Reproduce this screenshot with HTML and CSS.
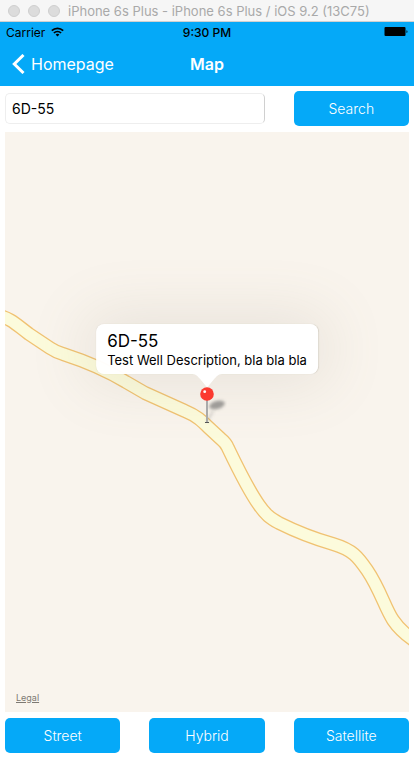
FILE: index.html
```html
<!DOCTYPE html>
<html lang="en">
<head>
<meta charset="utf-8">
<meta name="viewport" content="width=device-width, initial-scale=1">
<title>Map</title>
<link rel="stylesheet" href="styles.css">
</head>
<body>
<div class="window-bar">
  <div class="lights"><span class="light"></span><span class="light"></span><span class="light"></span></div>
  <span class="window-title">iPhone 6s Plus - iPhone 6s Plus / iOS 9.2 (13C75)</span>
</div>
<header class="top">
  <div class="status">
    <div class="carrier">Carrier
      <svg width="13" height="10" viewBox="0 0 13 10" fill="none" stroke="#000" stroke-width="1.7"><path d="M.8 3.6a8.2 8.2 0 0 1 11.4 0M2.9 6a5.2 5.2 0 0 1 7.2 0"/><path d="M6.5 9.5 4.6 7.6a2.8 2.8 0 0 1 3.8 0z" fill="#000" stroke="none"/></svg>
    </div>
    <span class="time">9:30 PM</span>
    <svg class="battery" width="24" height="10" viewBox="0 0 24 10"><rect x=".5" width="21" height="9" rx="1"/><path d="M22.5 3.2c1.3.3 1.3 2.5 0 2.8z"/></svg>
  </div>
  <nav class="nav">
    <a class="back" href="#"><svg width="13" height="20" viewBox="0 0 13 20" fill="none" stroke="#fff" stroke-width="3"><path d="M11.5 1 2.3 10l9.2 9"/></svg>Homepage</a>
    <h1 class="title">Map</h1>
  </nav>
</header>
<main class="content">
  <form class="row">
    <input class="field" type="text" aria-label="Well name" value="6D-55">
    <button class="btn" type="button">Search</button>
  </form>
  <section class="map" aria-label="Map">
    <svg class="roads" viewBox="5 132 404 580" preserveAspectRatio="xMidYMid slice" fill="none" stroke-linejoin="round">
      <defs><path id="road" d="M-5 315C10 317 18 326 29 334L50 348Q56 352 63 354Q100 366 126 382L145 393L185 411C197 416 202 421 208 427L221 439Q226 443 228 448C240 473 249 491 259 505C266 515 270 518 279 523Q305 536 333 544C353 550 358 557 367 570C380 589 385 608 393 620C399 629 407 636 418 643"/></defs>
      <use href="#road" stroke="#f0c272" stroke-width="14"/>
      <use href="#road" stroke="#fcfbdc" stroke-width="11.4"/>
    </svg>
    <div class="callout">
      <strong class="name">6D-55</strong>
      <span class="desc">Test Well Description, bla bla bla</span>
      <svg class="tail" width="30" height="14" viewBox="0 0 30 14" fill="#fff"><path d="M0 0h30c-4 0-6 3-8 5l-7 8.5L8 5C6 3 4 0 0 0z"/></svg>
    </div>
    <svg class="pin" width="40" height="40" viewBox="0 0 40 40">
      <defs><filter id="soft" x="-50%" y="-80%" width="200%" height="260%"><feGaussianBlur stdDeviation="1.8"/></filter></defs>
      <path d="m20 35 6-11" stroke="#777" stroke-opacity=".3" stroke-width="2" filter="url(#soft)"/>
      <ellipse cx="30" cy="18" rx="8" ry="4" fill="#555" fill-opacity=".55" transform="rotate(-15 30 18)" filter="url(#soft)"/>
      <path d="M20 13v22" stroke="#aaa" stroke-width="2"/>
      <path d="M18 35.5h4" stroke="#555"/>
      <circle cx="20" cy="7" r="6.8" fill="#fb3a30"/>
      <circle cx="17.7" cy="4.7" r="1.4" fill="#fff"/>
    </svg>
    <a class="legal" href="#">Legal</a>
  </section>
  <div class="row">
    <button class="btn" type="button">Street</button>
    <button class="btn" type="button">Hybrid</button>
    <button class="btn" type="button">Satellite</button>
  </div>
</main>
</body>
</html>
```
FILE: styles.css
```css
* { box-sizing: border-box; }
body {
  margin: 0;
  min-height: 100vh;
  display: flex;
  flex-direction: column;
  background: #fff;
  color: #000;
  font-family: Inter, "Liberation Sans", sans-serif;
}
.window-bar {
  display: flex;
  align-items: center;
  gap: 8px;
  height: 22px;
  padding: 0 8px;
  background: #f6f6f6;
  border-bottom: 1px solid #d0d0d0;
  color: #a9a9a9;
  font-size: 13px;
  white-space: nowrap;
}
.lights { display: flex; gap: 8px; }
.light {
  width: 12px;
  height: 12px;
  border: 1px solid #cfcfcf;
  border-radius: 50%;
  background: #dcdcdc;
}
.top { background: #05a9f8; }
.status {
  display: grid;
  grid-template-columns: 1fr auto 1fr;
  align-items: center;
  height: 20px;
  padding: 0 6px;
  font-size: 12px;
}
.carrier { display: flex; align-items: center; gap: 6px; }
.time { font-weight: 500; }
.battery { justify-self: end; }
.nav {
  display: grid;
  grid-template-columns: 1fr auto 1fr;
  align-items: center;
  height: 44px;
  padding: 0 12px;
  color: #fff;
}
.back {
  display: flex;
  align-items: center;
  gap: 6px;
  color: inherit;
  font-size: 16px;
  text-decoration: none;
}
.title { margin: 0; font-size: 16px; font-weight: 600; }
.content {
  flex: 1;
  display: flex;
  flex-direction: column;
  gap: 6px;
  padding: 5px;
}
.row {
  display: grid;
  grid-template-columns: repeat(3, 1fr);
  align-items: center;
  gap: 29px;
}
.field {
  grid-column: span 2;
  min-width: 0;
  height: 31px;
  padding: 0 6px;
  border: 1px solid #eee;
  border-right-color: #d0d0d0;
  border-radius: 5px;
  background: #fff;
  color: inherit;
  font: inherit;
  font-size: 14px;
}
.btn {
  height: 35px;
  padding: 0;
  border: 0;
  border-radius: 5px;
  background: #05a9f8;
  color: #fff;
  font: inherit;
  font-size: 14px;
  font-weight: 300;
}
.map {
  position: relative;
  flex: 1;
  min-height: 320px;
  overflow: hidden;
  background: #f9f4ed;
}
.roads { position: absolute; inset: 0; width: 100%; height: 100%; }
.callout {
  position: absolute;
  left: 50%;
  bottom: calc(50% + 48px);
  transform: translateX(-50%);
  display: flex;
  flex-direction: column;
  padding: 7px 11px 5px;
  border-radius: 8px;
  background: #fffffff7;
  box-shadow: 0 0 60px 10px #857c6824, 0 0 1px #857c6844;
  white-space: nowrap;
}
.name { font-size: 17px; line-height: 20px; font-weight: 400; }
.desc { font-size: 13px; line-height: 18px; }
.tail { position: absolute; top: 100%; left: calc(50% - 15px); }
.pin { position: absolute; left: calc(50% - 20px); top: calc(50% - 35px); }
.legal {
  position: absolute;
  left: 11px;
  bottom: 8px;
  color: #7d7973;
  font-size: 9px;
  line-height: 12px;
}
```
